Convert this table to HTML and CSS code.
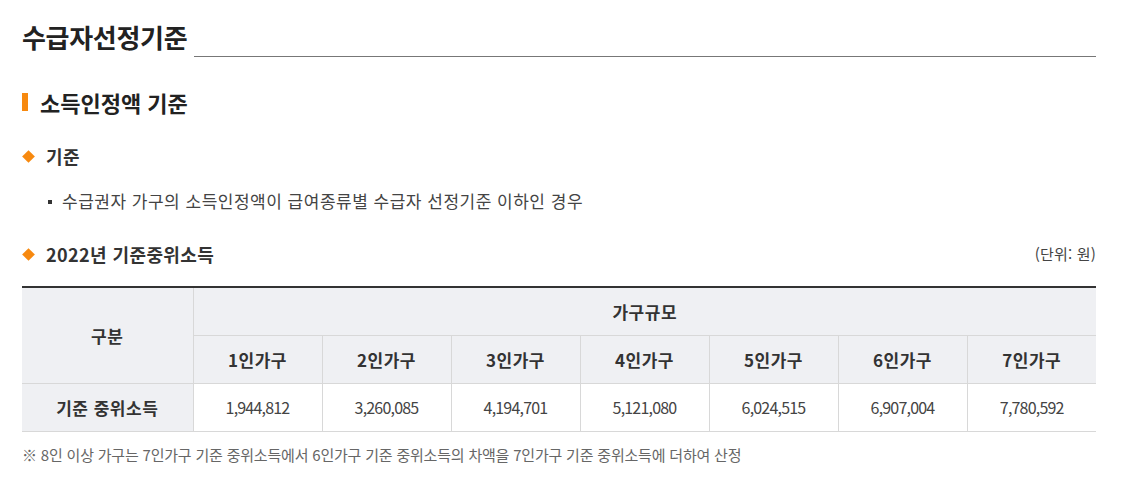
FILE: index.html
```html
<!DOCTYPE html>
<html lang="ko">
<head>
<meta charset="utf-8">
<link rel="stylesheet" href="styles.css">
</head>
<body>
<div class="page">
  <div class="title-row">
    <h2 class="title">수급자선정기준</h2>
    <span class="title-line"></span>
  </div>
  <h3 class="sub">소득인정액 기준</h3>
  <h4 class="dia">기준</h4>
  <ul class="list">
    <li>수급권자 가구의 소득인정액이 급여종류별 수급자 선정기준 이하인 경우</li>
  </ul>
  <div class="dia-row">
    <h4 class="dia">2022년 기준중위소득</h4>
    <span class="unit">(단위: 원)</span>
  </div>
  <table class="tbl">
    <colgroup>
      <col class="c0"><col><col><col><col><col><col><col>
    </colgroup>
    <thead>
      <tr>
        <th rowspan="2" class="first">구분</th>
        <th colspan="7">가구규모</th>
      </tr>
      <tr>
        <th>1인가구</th><th>2인가구</th><th>3인가구</th><th>4인가구</th><th>5인가구</th><th>6인가구</th><th>7인가구</th>
      </tr>
    </thead>
    <tbody>
      <tr>
        <th class="first">기준 중위소득</th>
        <td>1,944,812</td><td>3,260,085</td><td>4,194,701</td><td>5,121,080</td><td>6,024,515</td><td>6,907,004</td><td>7,780,592</td>
      </tr>
    </tbody>
  </table>
  <p class="note">※ 8인 이상 가구는 7인가구 기준 중위소득에서 6인가구 기준 중위소득의 차액을 7인가구 기준 중위소득에 더하여 산정</p>
</div>
</body>
</html>
```
FILE: styles.css
```css
* { box-sizing: border-box; }
html, body { margin: 0; padding: 0; background: #fff; }
body {
  font-family: "Noto Sans CJK KR", "Noto Sans", sans-serif;
  color: #333;
}
.page {
  width: 1074px;
  margin-left: 22px;
  padding-top: 19px;
}
.title-row {
  display: flex;
  align-items: flex-end;
  gap: 7px;
}
.title {
  margin: 0;
  font-size: 26px;
  font-weight: 700;
  line-height: 36px;
  color: #222;
  letter-spacing: -0.3px;
}
.title-line {
  flex: 1;
  height: 1px;
  background: #777;
  margin-bottom: -2px;
}
.sub {
  margin: 32px 0 0;
  font-size: 22px;
  font-weight: 700;
  line-height: 30px;
  color: #222;
  padding-left: 18px;
  position: relative;
}
.sub::before {
  content: "";
  position: absolute;
  left: 0;
  top: 6px;
  width: 6px;
  height: 18px;
  background: #f7890f;
}
.dia {
  margin: 0;
  font-size: 18px;
  font-weight: 700;
  line-height: 26px;
  color: #333;
  padding-left: 24px;
  position: relative;
  letter-spacing: 0.4px;
}
.sub + .dia { margin-top: 26px; }
.dia::before {
  content: "";
  position: absolute;
  left: 2px;
  top: 9px;
  width: 9px;
  height: 9px;
  background: #f7890f;
  transform: rotate(45deg);
}
.list {
  list-style: none;
  margin: 19px 0 0;
  padding: 0 0 0 26px;
}
.list li {
  font-size: 17px;
  line-height: 26px;
  color: #444;
  padding-left: 14px;
  position: relative;
  letter-spacing: 0.5px;
}
.list li::before {
  content: "";
  position: absolute;
  left: 0;
  top: 12px;
  width: 4px;
  height: 4px;
  background: #333;
}
.dia-row {
  margin-top: 27px;
  display: flex;
  justify-content: space-between;
  align-items: center;
}
.unit {
  font-size: 15px;
  color: #444;
  line-height: 20px;
  letter-spacing: 0.2px;
}
.tbl {
  margin-top: 19px;
  width: 1074px;
  border-collapse: collapse;
  table-layout: fixed;
  border-top: 2px solid #333;
}
.tbl col.c0 { width: 171px; }
.tbl th, .tbl td {
  border: 1px solid #d8d8d8;
  text-align: center;
  height: 48px;
  font-size: 17px;
  padding: 0;
}
.tbl tr > :first-child { border-left: none; }
.tbl tr > :last-child { border-right: none; }
.tbl thead tr:first-child th { border-top: none; }
.tbl th {
  background: #eff0f3;
  font-weight: 700;
  color: #333;
  letter-spacing: 0.5px;
}
.tbl td {
  background: #fff;
  color: #444;
  font-weight: 400;
  font-size: 16px;
  letter-spacing: -0.8px;
}
.note {
  margin: 12px 0 0;
  font-size: 15px;
  line-height: 22px;
  color: #666;
  letter-spacing: -0.2px;
}
```
